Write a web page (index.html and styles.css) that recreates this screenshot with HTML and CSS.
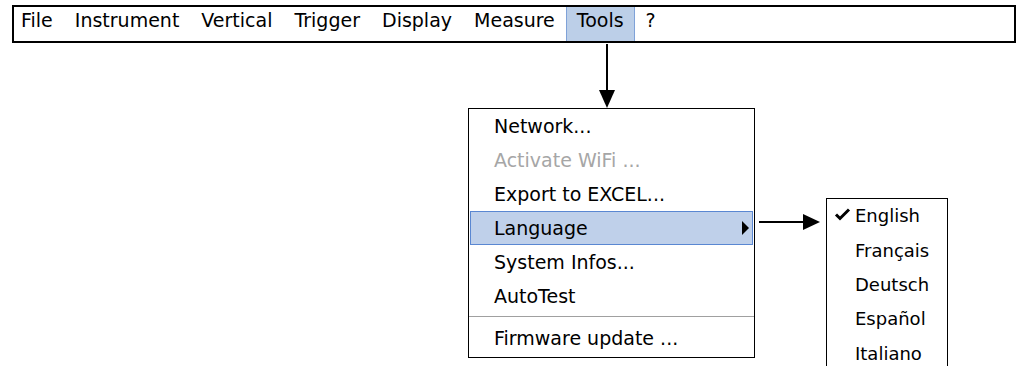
FILE: index.html
```html
<!DOCTYPE html>
<html lang="en">
<head>
<meta charset="utf-8">
<title>Tools menu – Language</title>
<link rel="stylesheet" href="styles.css">
</head>
<body>
<nav class="menubar">
  <span class="mb-item">File</span>
  <span class="mb-item">Instrument</span>
  <span class="mb-item">Vertical</span>
  <span class="mb-item">Trigger</span>
  <span class="mb-item">Display</span>
  <span class="mb-item">Measure</span>
  <span class="mb-item mb-active">Tools</span>
  <span class="mb-item">?</span>
</nav>

<div class="diagram">
  <div class="tools-col">
    <svg class="down-arrow" width="18" height="65" viewBox="0 0 18 65">
      <line x1="9" y1="1" x2="9" y2="48" stroke="#000" stroke-width="2"/>
      <polygon points="1,47 17,47 9,65" fill="#000"/>
    </svg>
    <div class="menu tools-menu">
      <div class="mi">Network...</div>
      <div class="mi mi-disabled">Activate WiFi ...</div>
      <div class="mi">Export to EXCEL...</div>
      <div class="mi mi-hl">
        <span>Language</span>
        <svg class="sub-tri" width="7" height="14" viewBox="0 0 7 14"><polygon points="0,0 7,7 0,14" fill="#000"/></svg>
      </div>
      <div class="mi">System Infos...</div>
      <div class="mi">AutoTest</div>
      <div class="sep"></div>
      <div class="mi">Firmware update ...</div>
    </div>
  </div>

  <svg class="right-arrow" width="71" height="16" viewBox="0 0 71 16">
    <line x1="4" y1="8" x2="50" y2="8" stroke="#000" stroke-width="2"/>
    <polygon points="48,0 65,8 48,16" fill="#000"/>
  </svg>

  <div class="menu lang-menu">
    <div class="li">
      <span class="check"><svg width="17" height="13" viewBox="0 0 17 13"><polyline points="2,6.5 6,10.5 15,1.5" fill="none" stroke="#000" stroke-width="3"/></svg></span>
      <span>English</span>
    </div>
    <div class="li"><span class="check"></span><span>Français</span></div>
    <div class="li"><span class="check"></span><span>Deutsch</span></div>
    <div class="li"><span class="check"></span><span>Español</span></div>
    <div class="li"><span class="check"></span><span>Italiano</span></div>
  </div>
</div>
</body>
</html>
```

FILE: styles.css
```css
html, body {
  margin: 0;
  padding: 0;
  background: #fff;
  overflow: hidden;
  height: 366px;
}

body {
  font-family: "DejaVu Sans", Verdana, sans-serif;
  color: #000;
}

.menubar {
  display: flex;
  box-sizing: border-box;
  width: 1004px;
  height: 38px;
  margin: 5px 0 0 12px;
  border: 2px solid #000;
  font-size: 19px;
}

.mb-item {
  padding: 0 10px 7px 10px;
  line-height: 27px;
  border-left: 1px solid transparent;
  border-right: 1px solid transparent;
}

.mb-item:first-child {
  padding-left: 6px;
}

.mb-active {
  background: #bccfe8;
  border-left-color: #7fa2d8;
  border-right-color: #7fa2d8;
}

.diagram {
  display: flex;
  align-items: flex-start;
  margin-left: 468px;
}

.tools-col {
  display: flex;
  flex-direction: column;
  width: 287px;
}

.down-arrow {
  display: block;
  margin-left: 130px;
}

.menu {
  box-sizing: border-box;
  border: 1px solid #000;
  background: #fff;
}

.tools-menu {
  width: 287px;
  font-size: 19px;
  padding-bottom: 2px;
}

.mi {
  height: 34px;
  line-height: 34px;
  padding-left: 25px;
  white-space: nowrap;
}

.mi-disabled {
  color: #a6a6a6;
}

.mi-hl {
  display: flex;
  align-items: center;
  justify-content: space-between;
  height: 32px;
  line-height: 32px;
  margin: 0 1px;
  padding: 0 3px 0 23px;
  background: #bfd0ea;
  border: 1px solid #5a87d2;
}

.sub-tri {
  display: block;
}

.sep {
  height: 1px;
  margin: 3px 0;
  background: #a0a0a0;
  border-bottom: 1px solid #fff;
}

.right-arrow {
  display: block;
  margin-top: 171px;
}

.lang-menu {
  width: 122px;
  height: 180px;
  margin-top: 155px;
  border-bottom: none;
  font-size: 18px;
}

.li {
  display: flex;
  align-items: center;
  height: 34.4px;
  line-height: 34px;
}

.check {
  display: flex;
  align-items: center;
  width: 28px;
  flex: none;
}

.check svg {
  display: block;
  margin-left: 7px;
  margin-top: -4px;
}
```
